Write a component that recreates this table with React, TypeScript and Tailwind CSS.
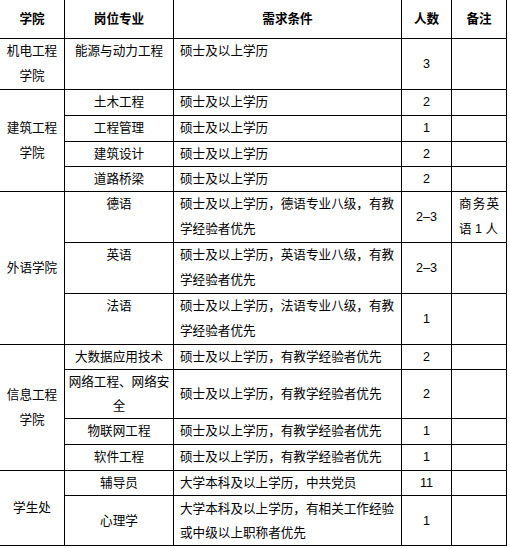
import React from 'react';

const td = 'border border-black p-0';

export default function App() {
  return (
    <div className="w-[510px] h-[548px] overflow-hidden bg-white">
      <table
        className="-mt-px -ml-px table-fixed border-collapse text-black text-[12.6px] leading-[25px] w-[507px]"
        style={{ fontFamily: '"Liberation Sans", "Noto Sans CJK SC", sans-serif' }}
      >
        <colgroup>
          <col className="w-[65px]" />
          <col className="w-[109px]" />
          <col className="w-[228px]" />
          <col className="w-[50px]" />
          <col className="w-[55px]" />
        </colgroup>
        <tbody>
          {/* Header */}
          <tr className="h-[39px] font-bold text-center">
            <td className={td}>学院</td>
            <td className={td}>岗位专业</td>
            <td className={td}>需求条件</td>
            <td className={td}>人数</td>
            <td className={td}>备注</td>
          </tr>

          {/* 机电工程学院 */}
          <tr className="h-[51px]">
            <td className={`${td} text-center align-middle`}>机电工程<br />学院</td>
            <td className={`${td} text-center align-top`}>能源与动力工程</td>
            <td className={`${td} pl-[6px] align-top`}>硕士及以上学历</td>
            <td className={`${td} text-center`}>3</td>
            <td className={td}></td>
          </tr>

          {/* 建筑工程学院 */}
          <tr className="h-[26px]">
            <td className={`${td} text-center`} rowSpan={4}>建筑工程<br />学院</td>
            <td className={`${td} text-center`}>土木工程</td>
            <td className={`${td} pl-[6px]`}>硕士及以上学历</td>
            <td className={`${td} text-center`}>2</td>
            <td className={td}></td>
          </tr>
          <tr className="h-[26px]">
            <td className={`${td} text-center`}>工程管理</td>
            <td className={`${td} pl-[6px]`}>硕士及以上学历</td>
            <td className={`${td} text-center`}>1</td>
            <td className={td}></td>
          </tr>
          <tr className="h-[25px] leading-[23px]">
            <td className={`${td} text-center`}>建筑设计</td>
            <td className={`${td} pl-[6px]`}>硕士及以上学历</td>
            <td className={`${td} text-center`}>2</td>
            <td className={td}></td>
          </tr>
          <tr className="h-[25px] leading-[23px]">
            <td className={`${td} text-center`}>道路桥梁</td>
            <td className={`${td} pl-[6px]`}>硕士及以上学历</td>
            <td className={`${td} text-center`}>2</td>
            <td className={td}></td>
          </tr>

          {/* 外语学院 */}
          <tr className="h-[51px]">
            <td className={`${td} text-center`} rowSpan={3}>外语学院</td>
            <td className={`${td} text-center align-top`}>德语</td>
            <td className={`${td} pl-[6px] align-top`}>硕士及以上学历，德语专业八级，有教<br />学经验者优先</td>
            <td className={`${td} text-center`}>2–3</td>
            <td className={`${td} align-top px-[7px]`}>
              <div className="flex justify-between"><span>商</span><span>务</span><span>英</span></div>
              <div>语 1 人</div>
            </td>
          </tr>
          <tr className="h-[51px]">
            <td className={`${td} text-center align-top`}>英语</td>
            <td className={`${td} pl-[6px] align-top`}>硕士及以上学历，英语专业八级，有教<br />学经验者优先</td>
            <td className={`${td} text-center`}>2–3</td>
            <td className={td}></td>
          </tr>
          <tr className="h-[51px]">
            <td className={`${td} text-center align-top`}>法语</td>
            <td className={`${td} pl-[6px] align-top`}>硕士及以上学历，法语专业八级，有教<br />学经验者优先</td>
            <td className={`${td} text-center`}>1</td>
            <td className={td}></td>
          </tr>

          {/* 信息工程学院 */}
          <tr className="h-[25px] leading-[23px]">
            <td className={`${td} text-center leading-[25px]`} rowSpan={4}>信息工程<br />学院</td>
            <td className={`${td} text-center`}>大数据应用技术</td>
            <td className={`${td} pl-[6px]`}>硕士及以上学历，有教学经验者优先</td>
            <td className={`${td} text-center`}>2</td>
            <td className={td}></td>
          </tr>
          <tr className="h-[49px] leading-[24px]">
            <td className={`${td} text-center`}>网络工程、网络安<br />全</td>
            <td className={`${td} pl-[6px]`}>硕士及以上学历，有教学经验者优先</td>
            <td className={`${td} text-center`}>2</td>
            <td className={td}></td>
          </tr>
          <tr className="h-[26px]">
            <td className={`${td} text-center`}>物联网工程</td>
            <td className={`${td} pl-[6px]`}>硕士及以上学历，有教学经验者优先</td>
            <td className={`${td} text-center`}>1</td>
            <td className={td}></td>
          </tr>
          <tr className="h-[26px]">
            <td className={`${td} text-center`}>软件工程</td>
            <td className={`${td} pl-[6px]`}>硕士及以上学历，有教学经验者优先</td>
            <td className={`${td} text-center`}>1</td>
            <td className={td}></td>
          </tr>

          {/* 学生处 */}
          <tr className="h-[25px] leading-[23px]">
            <td className={`${td} text-center`} rowSpan={2}>学生处</td>
            <td className={`${td} text-center`}>辅导员</td>
            <td className={`${td} pl-[6px]`}>大学本科及以上学历，中共党员</td>
            <td className={`${td} text-center`}>11</td>
            <td className={td}></td>
          </tr>
          <tr className="h-[50px] leading-[24px]">
            <td className={`${td} text-center`}>心理学</td>
            <td className={`${td} pl-[6px]`}>大学本科及以上学历，有相关工作经验<br />或中级以上职称者优先</td>
            <td className={`${td} text-center`}>1</td>
            <td className={td}></td>
          </tr>
        </tbody>
      </table>
    </div>
  );
}
